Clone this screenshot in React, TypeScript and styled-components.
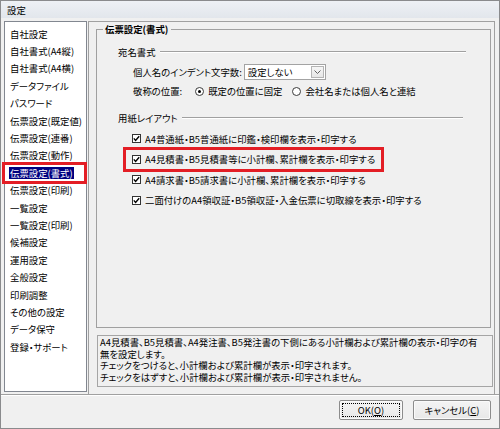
import React from "react";
import styled, { createGlobalStyle } from "styled-components";

const GlobalStyle = createGlobalStyle`
  html, body {
    margin: 0;
    padding: 0;
    background: #ffffff;
  }
  body {
    font-family: "Noto Sans CJK JP", "Liberation Sans", sans-serif;
    font-size: 9.4px;
    font-feature-settings: "palt";
    color: #000;
  }
`;

const navItems = [
  "自社設定",
  "自社書式(A4縦)",
  "自社書式(A4横)",
  "データファイル",
  "パスワード",
  "伝票設定(既定値)",
  "伝票設定(連番)",
  "伝票設定(動作)",
  "伝票設定(書式)",
  "伝票設定(印刷)",
  "一覧設定",
  "一覧設定(印刷)",
  "候補設定",
  "運用設定",
  "全般設定",
  "印刷調整",
  "その他の設定",
  "データ保守",
  "登録・サポート",
];

const checks = [
  { label: "A4普通紙・B5普通紙に印鑑・検印欄を表示・印字する", marked: false },
  { label: "A4見積書・B5見積書等に小計欄、累計欄を表示・印字する", marked: true },
  { label: "A4請求書・B5請求書に小計欄、累計欄を表示・印字する", marked: false },
  { label: "二面付けのA4領収証・B5領収証・入金伝票に切取線を表示・印字する", marked: false },
];

const Window = styled.div`
  width: 500px;
  height: 429px;
  box-sizing: border-box;
  border: 1px solid #8a8b8d;
  background: #f0f0f0;
  display: flex;
  flex-direction: column;
`;

const TitleBar = styled.div`
  height: 17px;
  flex: none;
  display: flex;
  align-items: center;
  padding-left: 6px;
  background: linear-gradient(#eef1f5, #e2e6ec);
`;

const Body = styled.div`
  height: 376px;
  flex: none;
  display: flex;
  padding: 3px 4px 0 3px;
  gap: 1px;
  box-sizing: border-box;
`;

const NavList = styled.ul`
  width: 83px;
  height: 371px;
  box-sizing: border-box;
  margin: 0;
  padding: 3px 0 0 0;
  list-style: none;
  background: #fff;
  border: 1px solid #828790;
  flex: none;
`;

const NavRow = styled.li<{ $marked?: boolean }>`
  height: 17.4px;
  display: flex;
  align-items: center;
  padding-left: 4px;
  position: relative;
  white-space: nowrap;

  ${({ $marked }) =>
    $marked &&
    `
    &::after {
      content: "";
      position: absolute;
      left: -3px;
      right: -1px;
      top: -2px;
      bottom: -2px;
      border: 3px solid #e31e25;
    }
  `}
`;

const NavText = styled.span<{ $selected?: boolean }>`
  padding: 0 1px;
  line-height: 12px;
  background: ${({ $selected }) => ($selected ? "#000080" : "transparent")};
  color: ${({ $selected }) => ($selected ? "#fff" : "#000")};
`;

const Panel = styled.div`
  width: 407px;
  height: 373px;
  box-sizing: border-box;
  border: 1px solid #a0a0a0;
  border-bottom: none;
  display: flex;
  flex-direction: column;
  flex: none;
`;

const GroupBox = styled.div`
  margin: 1px 3px 0 7px;
  display: flex;
  flex-direction: column;
`;

const GroupTop = styled.div`
  height: 12px;
  display: flex;

  &::before,
  &::after {
    content: "";
    margin-top: 6px;
    border-top: 1px solid #a0a0a0;
  }
  &::before {
    width: 6px;
    border-left: 1px solid #a0a0a0;
  }
  &::after {
    flex: 1;
    border-right: 1px solid #a0a0a0;
  }
`;

const GroupTitle = styled.span`
  font-weight: bold;
  line-height: 12px;
  padding: 0 3px 0 2px;
`;

const GroupBody = styled.div`
  height: 293px;
  box-sizing: border-box;
  border: 1px solid #a0a0a0;
  border-top: none;
  display: flex;
  flex-direction: column;
`;

const SectionHead = styled.div<{ $top: number; $end: number }>`
  height: 16px;
  display: flex;
  align-items: center;
  gap: 4px;
  margin: ${({ $top, $end }) => `${$top}px ${$end}px 0 21px`};

  &::after {
    content: "";
    flex: 1;
    border-top: 1px solid #a0a0a0;
    border-bottom: 1px solid #fff;
  }
`;

const FormRow = styled.div<{ $top: number }>`
  height: 18px;
  display: flex;
  align-items: center;
  padding-left: 36px;
  margin-top: ${({ $top }) => $top}px;
  white-space: nowrap;
`;

const Combo = styled.div`
  width: 82px;
  height: 16px;
  box-sizing: border-box;
  margin-left: 2px;
  border: 1px solid #a3a3a3;
  background: #fff;
  display: flex;
  align-items: center;
  justify-content: space-between;
  padding: 0 1px 0 3px;
`;

const ComboButton = styled.span`
  width: 13px;
  height: 12px;
  box-sizing: border-box;
  border: 1px solid #b4b4b4;
  background: linear-gradient(#f6f6f6, #e6e6e6);
  display: flex;
  align-items: center;
  justify-content: center;
`;

const Radio = styled.span<{ $checked?: boolean; $gap: number }>`
  width: 9px;
  height: 9px;
  box-sizing: border-box;
  border-radius: 50%;
  border: 1px solid #3c3c3c;
  background: #fff;
  margin: 0 4px 0 ${({ $gap }) => $gap}px;
  display: flex;
  align-items: center;
  justify-content: center;
  flex: none;

  &::after {
    content: "";
    width: 3px;
    height: 3px;
    border-radius: 50%;
    background: ${({ $checked }) => ($checked ? "#000" : "transparent")};
  }
`;

const CheckRow = styled.div<{ $marked?: boolean }>`
  height: 20.5px;
  display: flex;
  align-items: center;
  align-self: flex-start;
  margin-left: 35px;
  white-space: nowrap;
  position: relative;

  ${({ $marked }) =>
    $marked &&
    `
    &::after {
      content: "";
      position: absolute;
      left: -9px;
      right: -9px;
      top: -2.5px;
      bottom: -2.5px;
      border: 3.5px solid #e31e25;
    }
  `}
`;

const CheckList = styled.div`
  margin-top: 2.5px;
  display: flex;
  flex-direction: column;
`;

const Box = styled.span`
  width: 9px;
  height: 9px;
  box-sizing: border-box;
  border: 1px solid #333;
  background: #fff;
  margin-right: 4px;
  display: flex;
  align-items: center;
  justify-content: center;
  flex: none;
`;

const Description = styled.div`
  margin: 7px 1px 0 8px;
  height: 52px;
  box-sizing: border-box;
  border: 1px solid #a5a5a5;
  padding: 1px 2px 0;
  line-height: 11.5px;
`;

const DescLine = styled.div`
  white-space: nowrap;
`;

const Footer = styled.div`
  height: 34px;
  box-sizing: border-box;
  flex: none;
  border-top: 1px solid #a0a0a0;
  box-shadow: inset 0 1px 0 #fff;
  display: flex;
  justify-content: flex-end;
  align-items: flex-start;
  gap: 10px;
  padding: 5px 8px 0 0;
`;

const Button = styled.button<{ $w: number; $focused?: boolean }>`
  width: ${({ $w }) => $w}px;
  height: 20px;
  box-sizing: border-box;
  border: 1px solid #8c8c8c;
  border-radius: 2px;
  background: linear-gradient(#f4f4f4, #e8e8e8);
  box-shadow: inset 0 0 0 1px #fafafa;
  font: inherit;
  color: #000;
  padding: 0;
  outline: ${({ $focused }) => ($focused ? "1px dotted #000" : "none")};
  outline-offset: -4px;
`;

function Check() {
  return (
    <svg width="7" height="7" viewBox="0 0 7 7">
      <polyline points="0.8,3.4 2.6,5.4 6.2,1.2" fill="none" stroke="#000" strokeWidth="1.4" />
    </svg>
  );
}

export default function App() {
  return (
    <>
      <GlobalStyle />
      <Window>
        <TitleBar>設定</TitleBar>
        <Body>
          <NavList>
            {navItems.map((item) => {
              const selected = item === "伝票設定(書式)";
              return (
                <NavRow key={item} $marked={selected}>
                  <NavText $selected={selected}>{item}</NavText>
                </NavRow>
              );
            })}
          </NavList>
          <Panel>
            <GroupBox>
              <GroupTop>
                <GroupTitle>伝票設定(書式)</GroupTitle>
              </GroupTop>
              <GroupBody>
                <SectionHead $top={9} $end={24}>宛名書式</SectionHead>
                <FormRow $top={3}>
                  個人名のインデント文字数:
                  <Combo>
                    <span>設定しない</span>
                    <ComboButton>
                      <svg width="7" height="4" viewBox="0 0 7 4">
                        <polyline points="0.5,0.5 3.5,3.5 6.5,0.5" fill="none" stroke="#606060" strokeWidth="1" />
                      </svg>
                    </ComboButton>
                  </Combo>
                </FormRow>
                <FormRow $top={1}>
                  敬称の位置:
                  <Radio $checked $gap={13} />
                  既定の位置に固定
                  <Radio $gap={10} />
                  会社名または個人名と連結
                </FormRow>
                <SectionHead $top={10} $end={27}>用紙レイアウト</SectionHead>
                <CheckList>
                  {checks.map((c) => (
                    <CheckRow key={c.label} $marked={c.marked}>
                      <Box>
                        <Check />
                      </Box>
                      {c.label}
                    </CheckRow>
                  ))}
                </CheckList>
              </GroupBody>
            </GroupBox>
            <Description>
              <DescLine>A4見積書、B5見積書、A4発注書、B5発注書の下側にある小計欄および累計欄の表示・印字の有</DescLine>
              <DescLine>無を設定します。</DescLine>
              <DescLine>チェックをつけると、小計欄および累計欄が表示・印字されます。</DescLine>
              <DescLine>チェックをはずすと、小計欄および累計欄が表示・印字されません。</DescLine>
            </Description>
          </Panel>
        </Body>
        <Footer>
          <Button $w={64} $focused>
            OK(<u>O</u>)
          </Button>
          <Button $w={78}>
            キャンセル(<u>C</u>)
          </Button>
        </Footer>
      </Window>
    </>
  );
}
